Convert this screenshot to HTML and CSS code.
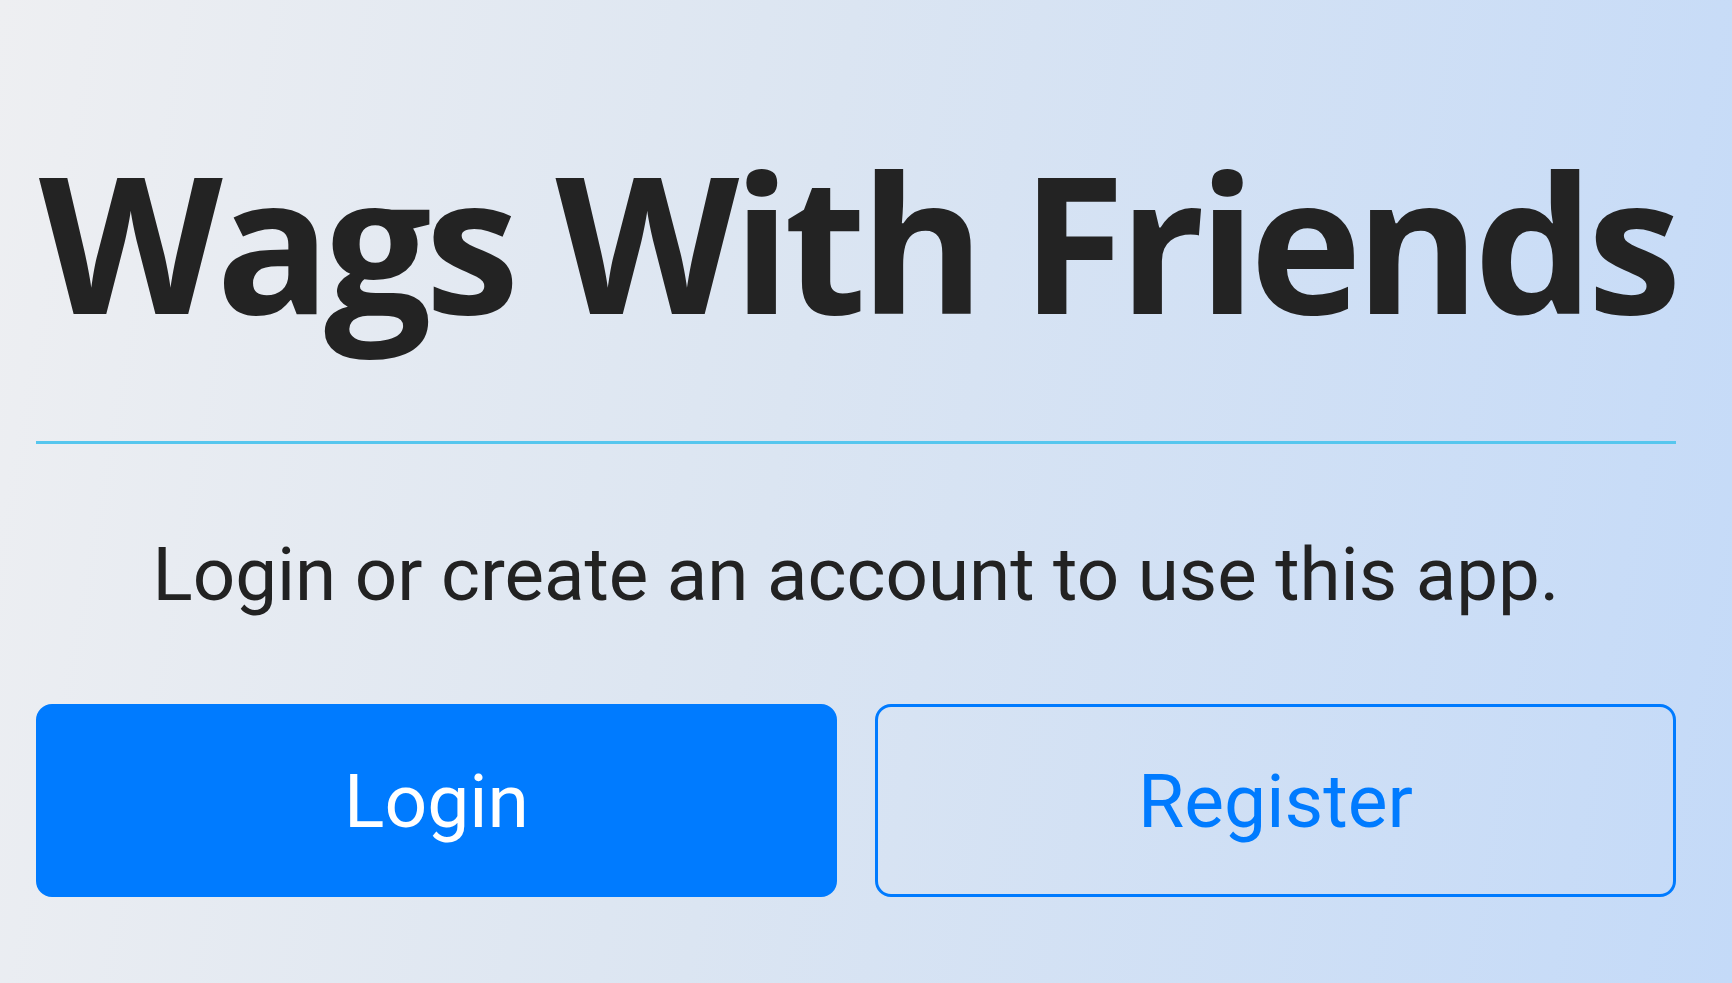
FILE: index.html
```html
<!DOCTYPE html>
<html lang="en">
<head>
<meta charset="utf-8">
<title>Wags With Friends</title>
<link rel="stylesheet" href="styles.css">
</head>
<body>
<main class="page">
  <section class="welcome">
    <h1 class="title">Wags With Friends</h1>
    <hr class="divider">
    <p class="lead">Login or create an account to use this app.</p>
    <div class="actions">
      <button class="btn btn-primary" type="button">Login</button>
      <button class="btn btn-outline" type="button">Register</button>
    </div>
  </section>
</main>
</body>
</html>
```
FILE: styles.css
```css
html, body {
  margin: 0;
  padding: 0;
  height: 100%;
}
body {
  background: linear-gradient(100deg, #eeeff2 0%, #dbe5f2 45%, #c4daf8 100%);
  font-family: Roboto, "Liberation Sans", sans-serif;
  color: #212121;
  overflow: hidden;
}
.page {
  height: 983px;
  box-sizing: border-box;
  padding: 146px 0 0 36px;
}
.welcome {
  width: 1640px;
  display: flex;
  flex-direction: column;
}
.title {
  margin: 0;
  padding-left: 3px;
  font-family: "Open Sans", sans-serif;
  font-weight: 700;
  font-size: 190px;
  line-height: 190px;
  letter-spacing: -6.6px;
  color: #232323;
  white-space: nowrap;
}
.divider {
  margin: 105px 0 0 0;
  border: 0;
  height: 3px;
  background: #56c6ee;
}
.lead {
  margin: 93px 0 0 0;
  font-size: 74.5px;
  line-height: 76px;
  text-align: center;
  color: #222;
}
.actions {
  margin-top: 91px;
  display: grid;
  grid-template-columns: 1fr 1fr;
  gap: 38px;
}
.btn {
  height: 193px;
  border-radius: 16px;
  font-family: Roboto, sans-serif;
  font-size: 75px;
  line-height: 76px;
  padding: 0;
  box-sizing: border-box;
}
.btn-primary {
  background: #007bff;
  border: 3px solid #007bff;
  color: #fff;
}
.btn-outline {
  background: transparent;
  border: 3px solid #007bff;
  color: #007bff;
}
```
